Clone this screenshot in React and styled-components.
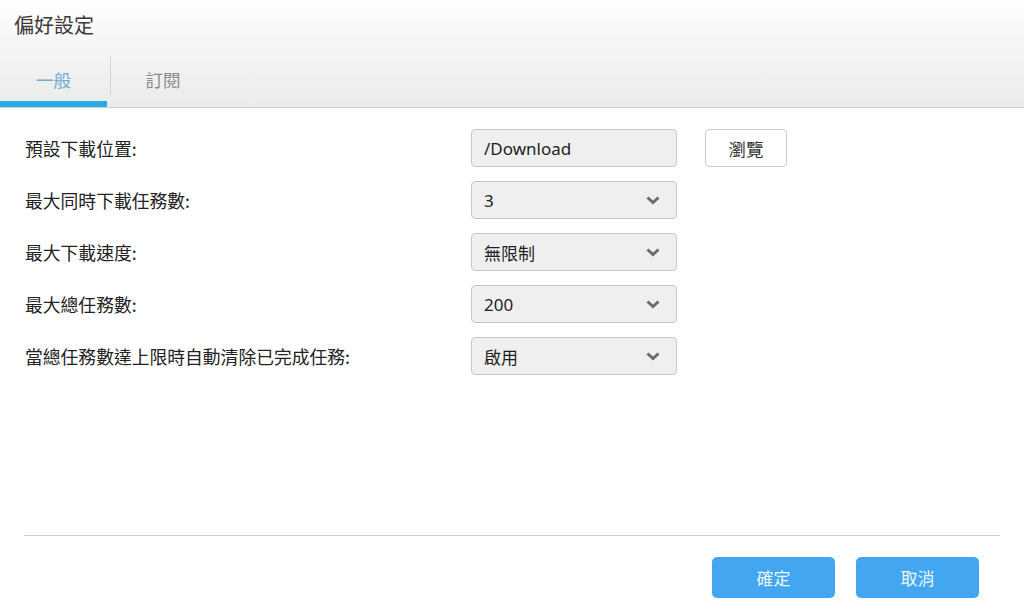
import styled, { createGlobalStyle } from 'styled-components';
import { useState } from 'react';

const GlobalStyle = createGlobalStyle`
  html, body {
    margin: 0;
    padding: 0;
    background: #ffffff;
    font-family: "Noto Sans CJK TC", "Noto Sans", sans-serif;
  }
  * { box-sizing: border-box; }
`;

const rows = [
  { label: '預設下載位置:', value: '/Download', kind: 'path' },
  { label: '最大同時下載任務數:', value: '3', kind: 'select' },
  { label: '最大下載速度:', value: '無限制', kind: 'select' },
  { label: '最大總任務數:', value: '200', kind: 'select' },
  { label: '當總任務數達上限時自動清除已完成任務:', value: '啟用', kind: 'select' },
];

const Chevron = () => (
  <svg width="14" height="9" viewBox="0 0 14 9">
    <path d="M1.5 1.5 L7 6.5 L12.5 1.5" fill="none" stroke="#6b6b6b" strokeWidth="3" />
  </svg>
);

export default function App() {
  const [tab, setTab] = useState(0);

  return (
    <>
      <GlobalStyle />
      <Page>
        <Header>
          <Title>偏好設定</Title>
          <Tabs>
            <Tab $active={tab === 0} $width={107} onClick={() => setTab(0)}>一般</Tab>
            <TabDivider />
            <Tab $active={tab === 1} $width={104} onClick={() => setTab(1)}>訂閱</Tab>
          </Tabs>
        </Header>
        <Body>
          <Form>
            {rows.map((r) => (
              <Row key={r.label}>
                <Label>{r.label}</Label>
                <Field>
                  <Value>{r.value}</Value>
                  {r.kind === 'select' && <Chevron />}
                </Field>
                {r.kind === 'path' && <BrowseButton>瀏覽</BrowseButton>}
              </Row>
            ))}
          </Form>
          <Footer>
            <ActionButton>確定</ActionButton>
            <ActionButton>取消</ActionButton>
          </Footer>
        </Body>
      </Page>
    </>
  );
}

const Page = styled.div`
  width: 1024px;
  height: 614px;
  display: flex;
  flex-direction: column;
  background: #fff;
`;

const Header = styled.div`
  height: 108px;
  display: flex;
  flex-direction: column;
  justify-content: space-between;
  background: linear-gradient(to bottom, #fefefe 0%, #f4f4f4 50%, #ebebeb 100%);
  border-bottom: 1px solid #cfcfcf;
`;

const Title = styled.div`
  padding: 12px 0 0 14px;
  font-size: 20px;
  color: #3a3a3a;
  line-height: 26px;
`;

const Tabs = styled.div`
  display: flex;
  align-items: stretch;
  height: 43px;
`;

const Tab = styled.div`
  width: ${(p) => p.$width}px;
  display: flex;
  justify-content: center;
  padding-top: 3px;
  font-size: 17.5px;
  color: ${(p) => (p.$active ? '#72aed0' : '#8a8a8a')};
  border-bottom: 6px solid ${(p) => (p.$active ? '#2aaae3' : 'transparent')};
  cursor: pointer;
`;

const TabDivider = styled.div`
  width: 1px;
  margin: -8px 0 12px 3px;
  background: #d3d3d3;
`;

const Body = styled.div`
  flex: 1;
  display: flex;
  flex-direction: column;
  justify-content: space-between;
  padding: 21px 24px 16px 24px;
`;

const Form = styled.div`
  display: flex;
  flex-direction: column;
  gap: 14px;
`;

const Row = styled.div`
  display: flex;
  align-items: center;
  height: 38px;
`;

const Label = styled.div`
  width: 447px;
  padding-left: 1px;
  font-size: 17.8px;
  color: #222;
`;

const Field = styled.div`
  width: 206px;
  height: 38px;
  display: flex;
  align-items: center;
  justify-content: space-between;
  padding: 0 16px 0 12px;
  background: #efefef;
  border: 1px solid #c6c6c6;
  border-radius: 4px;
`;

const Value = styled.span`
  font-family: "Noto Sans", "Noto Sans CJK TC", sans-serif;
  font-size: 17px;
  color: #1e1e1e;
`;

const BrowseButton = styled.button`
  margin-left: 28px;
  width: 82px;
  height: 38px;
  background: #fff;
  border: 1px solid #c8c8c8;
  border-radius: 4px;
  font-family: "Noto Sans CJK TC", sans-serif;
  font-size: 17.5px;
  color: #333;
`;

const Footer = styled.div`
  border-top: 1px solid #cccccc;
  display: flex;
  justify-content: flex-end;
  gap: 21px;
  padding: 21px 21px 0 0;
`;

const ActionButton = styled.button`
  width: 123px;
  height: 41px;
  background: #42a7f0;
  border: none;
  border-radius: 5px;
  color: #eaf5fd;
  font-family: "Noto Sans CJK TC", sans-serif;
  font-size: 17px;
`;
